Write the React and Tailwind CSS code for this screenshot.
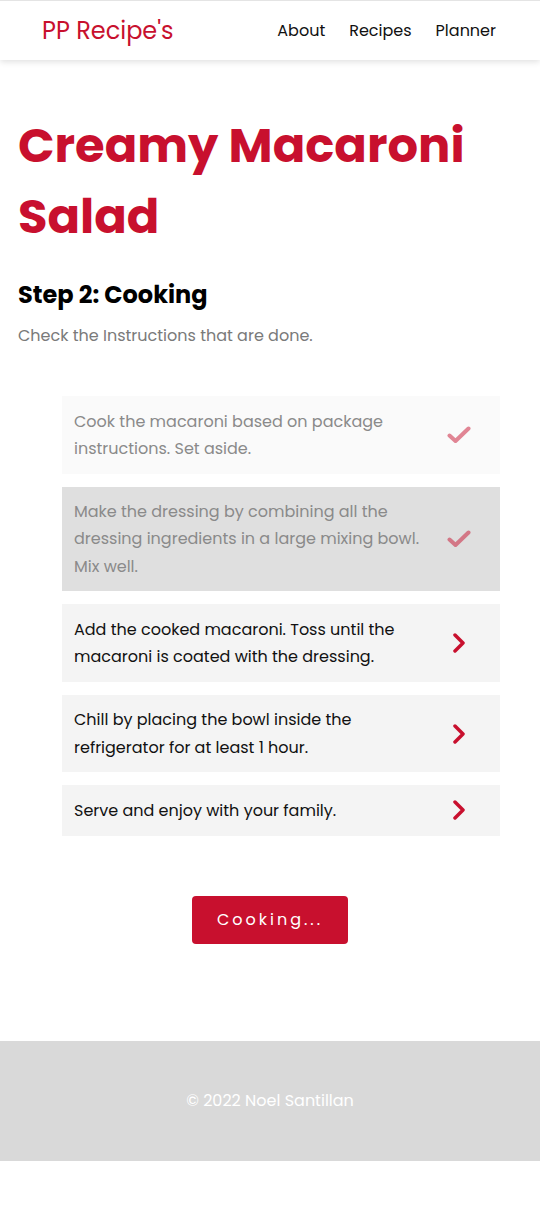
import React from 'react';

const steps = [
    { text: 'Cook the macaroni based on package instructions. Set aside.', done: true, bg: 'bg-[#fafafa]' },
    { text: 'Make the dressing by combining all the dressing ingredients in a large mixing bowl. Mix well.', done: true, bg: 'bg-[#dfdfdf]' },
    { text: 'Add the cooked macaroni. Toss until the macaroni is coated with the dressing.', done: false, bg: 'bg-[#f4f4f4]' },
    { text: 'Chill by placing the bowl inside the refrigerator for at least 1 hour.', done: false, bg: 'bg-[#f4f4f4]' },
    { text: 'Serve and enjoy with your family.', done: false, bg: 'bg-[#f4f4f4]' },
];

function CheckIcon() {
    return (
        <svg width="24" height="18" viewBox="0 0 24 18" fill="none">
            <polyline points="2.5,9.5 8.5,15 21.5,2.5" stroke="#c8102e" strokeOpacity="0.5" strokeWidth="4" strokeLinecap="round" strokeLinejoin="round" />
        </svg>
    );
}

function ChevronIcon() {
    return (
        <svg width="24" height="20" viewBox="0 0 24 20" fill="none">
            <polyline points="8,2 16,10 8,18" stroke="#c8102e" strokeWidth="3.5" strokeLinecap="round" strokeLinejoin="round" />
        </svg>
    );
}

export default function App() {
    return (
        <div className="min-h-[1215px] bg-white text-black font-['Poppins','Open_Sans',sans-serif]">
            {/* Header */}
            <header className="h-[60px] border-t border-[#e4e4e4] bg-white shadow-[0_2px_6px_rgba(0,0,0,0.12)] flex items-center justify-between pl-[42px] pr-[44px]">
                <span className="text-[24px] text-[#c8102e] leading-none">PP Recipe's</span>
                <nav className="flex gap-6 text-[16px] text-[#111]">
                    <span>About</span>
                    <span>Recipes</span>
                    <span>Planner</span>
                </nav>
            </header>

            <main className="px-[18px]">
                <h1 className="mt-[50px] text-[48px] leading-[71px] font-bold text-[#c8102e]">Creamy Macaroni Salad</h1>
                <h2 className="mt-[27px] text-[24px] leading-[32px] font-bold">Step 2: Cooking</h2>
                <p className="mt-[13px] text-[16px] leading-[24px] text-[#7a7a7a]">Check the Instructions that are done.</p>

                {/* Instructions */}
                <ul className="mt-[48px] ml-[44px] mr-[22px] flex flex-col gap-[13px]">
                    {steps.map((s, i) => (
                        <li key={i} className={`flex items-center gap-4 pl-3 pr-[29px] py-[11.5px] ${s.bg}`}>
                            <span className={`flex-1 text-[16px] leading-[27.25px] ${s.done ? 'text-[#8a8a8a]' : 'text-[#111]'}`}>{s.text}</span>
                            {s.done ? <CheckIcon /> : <ChevronIcon />}
                        </li>
                    ))}
                </ul>

                <div className="mt-[60px] flex justify-center">
                    <button className="w-[156px] h-[48px] rounded bg-[#c8102e] text-white text-[16px] tracking-[3px]">Cooking...</button>
                </div>
            </main>

            <footer className="mt-[97px] h-[120px] bg-[#d9d9d9] flex items-center justify-center text-white text-[16px]">
                © 2022 Noel Santillan
            </footer>
        </div>
    );
}
